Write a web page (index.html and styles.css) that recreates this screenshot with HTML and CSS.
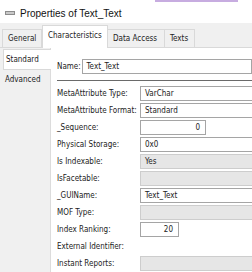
FILE: index.html
```html
<!DOCTYPE html>
<html lang="en">
<head>
  <meta charset="UTF-8">
  <title>Properties of Text_Text</title>
  <link rel="stylesheet" href="styles.css">
</head>
<body>
  <div class="window">
    <div class="titlebar">
      <span class="app-icon"></span>
      <span class="title">Properties of Text_Text</span>
      <span class="peek"></span>
    </div>
    <div class="tabs">
      <div class="tab">General</div>
      <div class="tab active">Characteristics</div>
      <div class="tab">Data Access</div>
      <div class="tab">Texts</div>
    </div>
    <div class="page">
      <ul class="nav">
        <li class="selected">Standard</li>
        <li>Advanced</li>
      </ul>
      <div class="form">
        <div class="name-row">
          <span class="label">Name:</span>
          <div class="field">Text_Text</div>
        </div>
        <div class="sep"></div>
        <div class="grid">
          <span class="label">MetaAttribute Type:</span>
          <div class="field">VarChar</div>
          <span class="label">MetaAttribute Format:</span>
          <div class="field">Standard</div>
          <span class="label">_Sequence:</span>
          <div class="field num seq">0</div>
          <span class="label">Physical Storage:</span>
          <div class="field">0x0</div>
          <span class="label">Is Indexable:</span>
          <div class="field readonly">Yes</div>
          <span class="label">IsFacetable:</span>
          <div class="field readonly"></div>
          <span class="label">_GUIName:</span>
          <div class="field">Text_Text</div>
          <span class="label">MOF Type:</span>
          <div class="field readonly"></div>
          <span class="label">Index Ranking:</span>
          <div class="field num rank">20</div>
          <span class="label">External Identifier:</span>
          <div class="empty"></div>
          <span class="label">Instant Reports:</span>
          <div class="field readonly"></div>
        </div>
      </div>
    </div>
  </div>
</body>
</html>
```

FILE: styles.css
```css
*{
  box-sizing: border-box;
  margin: 0;
  padding: 0;
}
body{
  width: 252px;
  height: 272px;
  overflow: hidden;
  background: #fff;
  font-family: "DejaVu Sans", "Liberation Sans", sans-serif;
  font-stretch: condensed;
  font-size: 8px;
  color: #222;
}
.window{
  width: 252px;
}
.titlebar{
  position: relative;
  height: 23px;
  display: flex;
  align-items: center;
  padding-top: 3px;
  background: #fff;
}
.app-icon{
  width: 10px;
  height: 4px;
  margin: 0 5px;
  background: #c9c9c9;
  border: 1px solid #8c8c8c;
}
.title{
  font-family: "Liberation Sans", sans-serif;
  font-stretch: normal;
  font-size: 10px;
  color: #111;
}
.peek{
  position: absolute;
  top: 0;
  left: 155px;
  width: 83px;
  height: 2px;
  background: #c7ace0;
}
.tabs{
  height: 25px;
  display: flex;
  align-items: flex-end;
  padding-left: 2px;
  background: #f0f0f0;
  border-bottom: 1px solid #d9d9d9;
}
.tab{
  height: 18px;
  line-height: 17px;
  padding: 0 5px;
  border: 1px solid #d9d9d9;
  border-bottom: none;
  margin-right: -1px;
  background: #f0f0f0;
}
.tab:nth-child(1){ width: 40px; }
.tab:nth-child(2){ width: 66px; }
.tab:nth-child(3){ width: 58px; }
.tab:nth-child(4){ width: 31px; }
.tab.active{
  height: 23px;
  line-height: 20px;
  margin-bottom: -1px;
  margin-left: 1px;
  background: #fff;
  position: relative;
}
.page{
  display: flex;
  height: 224px;
}
.nav{
  list-style: none;
  width: 51px;
  flex: none;
  padding: 1px 0 0 3px;
  background: #f0f0f0;
  border-right: 1px solid #dcdcdc;
}
.nav li{
  height: 21px;
  line-height: 19px;
  padding-left: 2px;
}
.nav li.selected{
  background: #fff;
  border: 1px solid #d9d9d9;
  border-right: none;
  margin-right: -1px;
}
.form{
  flex: 1;
  overflow: hidden;
  padding: 11px 0 0 6px;
  background: #fff;
}
.name-row{
  display: flex;
  align-items: center;
  height: 15px;
}
.name-row .label{
  width: 26px;
}
.name-row .field{
  width: 180px;
}
.sep{
  height: 1px;
  margin: 6px 0 5px 0;
  background: #6a6a6a;
}
.grid{
  display: grid;
  grid-template-columns: 83px 140px;
  grid-auto-rows: 15px;
  row-gap: 2px;
  align-items: center;
}
.label{
  white-space: nowrap;
}
.field{
  height: 15px;
  line-height: 13px;
  padding-left: 4px;
  border: 1px solid #a5a5a5;
  background: #fff;
  white-space: nowrap;
}
.field.readonly{
  background: #e6e6e6;
  border-color: #cdcdcd;
}
.field.num{
  text-align: right;
  padding-right: 5px;
}
.field.seq{
  width: 66px;
}
.field.rank{
  width: 39px;
}
```
